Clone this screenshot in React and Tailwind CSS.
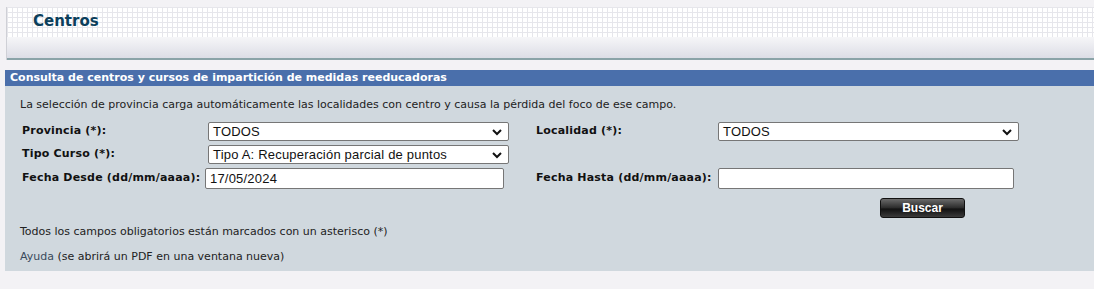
import React from "react";

const Chevron = () => (
  <svg className="absolute right-[6px] top-1/2 -translate-y-1/2 w-[10px] h-[8px]" viewBox="0 0 10 8">
    <path d="M1 2l4 4 4-4" fill="none" stroke="#111" strokeWidth="2" />
  </svg>
);

const FakeSelect = ({ value, w }) => (
  <div className={`relative h-[19px] ${w} bg-white border border-[#767676] rounded-[2px] pl-[4px] text-[13px] font-normal leading-[17px] text-[#111] font-['Liberation_Sans',Arial,sans-serif]`}>
    {value}
    <Chevron />
  </div>
);

const FakeInput = ({ value, w }) => (
  <div className={`h-[21px] ${w} bg-white border border-[#767676] rounded-[2px] pl-[4px] text-[13px] font-normal leading-[19px] text-[#111] font-['Liberation_Sans',Arial,sans-serif]`}>
    {value}
  </div>
);

export default function App() {
  return (
    <div className="w-[1094px] h-[289px] bg-[#f3f2f5] pt-[7px] font-['DejaVu_Sans',Verdana,sans-serif] text-[11px] text-[#222] overflow-hidden">
      {/* cabecera */}
      <div className="ml-[6px] border-l border-[#cfd0d6]">
        <div className="h-[30px] bg-white bg-[linear-gradient(#e6e6eb_1px,transparent_1px),linear-gradient(90deg,#e6e6eb_1px,transparent_1px)] bg-size-[5px_5px] pl-[26px] pt-[3px]">
          <span className="text-[15px] font-bold text-[#0c3f5c]">Centros</span>
        </div>
        <div className="h-[21px] bg-[linear-gradient(#f6f6f8,#dcdde6)]"></div>
        <div className="h-[2px] bg-[#8aa3a8]"></div>
      </div>

      {/* panel */}
      <div className="mt-[10px] ml-[5px]">
        <div className="h-[16px] bg-[#4a6fab] pl-[5px] text-white font-bold text-[11px] leading-[16px]">
          Consulta de centros y cursos de impartición de medidas reeducadoras
        </div>
        <div className="h-[185px] bg-[#d0d8de] pl-[15px] pt-[12px]">
          <p className="leading-[14px]">
            La selección de provincia carga automáticamente las localidades con centro y causa la pérdida del foco de ese campo.
          </p>

          <div className="mt-[10px] ml-[2px] grid grid-cols-[183px_331px_182px_auto] gap-y-[4px] items-center font-bold text-[#111] tracking-[0.2px]">
            <div>Provincia (*):</div>
            <div className="pl-[3px]"><FakeSelect value="TODOS" w="w-[301px]" /></div>
            <div>Localidad (*):</div>
            <div><FakeSelect value="TODOS" w="w-[301px]" /></div>

            <div>Tipo Curso (*):</div>
            <div className="pl-[3px]"><FakeSelect value="Tipo A: Recuperación parcial de puntos" w="w-[301px]" /></div>
            <div></div>
            <div></div>

            <div>Fecha Desde (dd/mm/aaaa):</div>
            <div><FakeInput value="17/05/2024" w="w-[299px]" /></div>
            <div>Fecha Hasta (dd/mm/aaaa):</div>
            <div><FakeInput value="" w="w-[296px]" /></div>
          </div>

          <div className="mt-[9px] ml-[860px] w-[85px] h-[20px] rounded-[3px] border border-[#111] bg-[linear-gradient(#6a6a6a,#2a2a2a_50%,#111_55%,#3a3a3a)] text-white font-bold text-center text-[12px] leading-[18px] font-['Liberation_Sans',Arial,sans-serif]">
            Buscar
          </div>

          <p className="mt-[7px] leading-[14px]">Todos los campos obligatorios están marcados con un asterisco (*)</p>
          <p className="mt-[11px] leading-[14px]">
            <span className="text-[#3a4a5c]">Ayuda</span> (se abrirá un PDF en una ventana nueva)
          </p>
        </div>
      </div>
    </div>
  );
}
